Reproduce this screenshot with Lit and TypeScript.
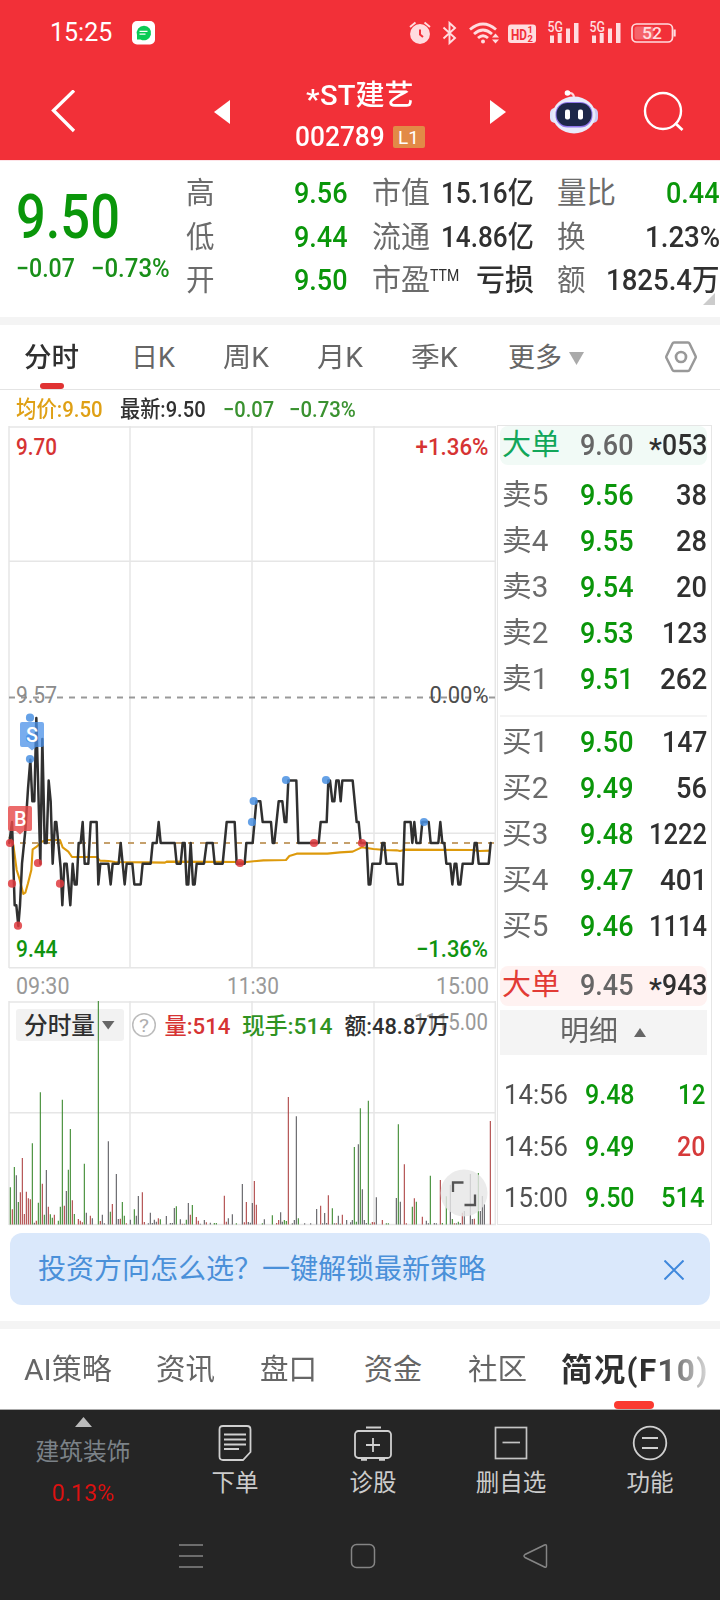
import { LitElement, html, svg, css } from "lit";
import { customElement, property, query } from "lit/decorators.js";

/** A single line of text condensed or widened to a given width. */
@customElement("fit-text")
class FitText extends LitElement {
  @property() text = "";
  @property({ type: Number }) w = 0;
  @query("span") span!: HTMLSpanElement;
  static styles = css`
    :host { display: inline-block; white-space: pre; flex: none; line-height: 1; vertical-align: middle; }
    span { display: block; width: max-content; transform-origin: 0 50%; }
  `;
  render() {
    return html`<span>${this.text}</span>`;
  }
  updated() {
    this.style.width = this.w + "px";
    const natural = this.span.offsetWidth;
    if (natural) this.span.style.transform = `scaleX(${this.w / natural})`;
  }
}

const t = (text: string, w: number, cls = "") =>
  html`<fit-text class=${cls} .text=${text} .w=${w}></fit-text>`;

// Minute prices as [x, cents above 9.00]
const PRICE: number[][] = [
  [28,50],[36,51],[40,49],[44,47],[49,47],[55,46],[60,47],[66,49],[76,50.6],[84,52.6],[91,54],[97,52],[103,52],[109,56],[121,49],[127,55],[134,50],[140,50],[146,53],[152,52],[158,49],[165,51],[169,51],[182,48.8],[187,47],[193,49],[200,49],[211,47],[218,49],[224,48],[230,48],[236,50],[242,50],[248,51],[254,49],[265,49],[272,51],[290,51],[295,48],[301,49],[325,49],[332,48],[338,49],[356,49],[362,50],[374,48],[380,49],[397,49],[403,48],[422,48],[428,49],[452,49],[458,50],[470,50],[476,51],[482,50],[524,50],[530,49],[542,49],[548,50],[554,50],[560,48],[565,48],[572,50],[579,48],[584,48],[590,49],[612,49],[620,50],[638,50],[644,49],[668,49],[680,51],[704,51],[710,49],
  [734,49],[739,50],[758,50],[769,52],[781,52],[788,51],[813,51],[818,50],[823,50],[836,52],[847,52],[854,51],[859,51],[865,53],[889,53],[895,50],[956,50],[962,51],[980,51],[985,53],[990,53],[997,52],[1003,52],[1009,53],[1016,53],[1022,52],[1027,53],[1058,53],[1070,51],[1076,51],[1082,50],[1100,50],[1106,48],[1111,48],[1117,49],[1141,49],[1147,50],[1153,50],[1159,49],[1189,49],[1195,48],[1208,48],[1214,51],[1232,51],[1237,50],[1243,51],[1249,50],[1261,50],[1267,51],[1286,51],[1292,50],[1315,50],[1321,51],[1327,50],[1333,50],[1339,49],[1351,49],[1357,48],[1364,49],[1369,49],[1375,48],[1381,48],[1388,49],[1418,49],[1424,50],[1430,50],[1436,49],[1466,49],[1472,50],
];
const AVG: number[][] = [
  [28,500],[40,525],[50,600],[58,625],[70,672],[76,668],[84,640],[94,600],[98,538],[110,530],[125,515],[140,510],[180,510],[188,532],[205,545],[216,561],[290,561],[300,572],[325,573],[345,576],[440,577],[495,578],[500,575],[740,576],[790,571],[858,570],[868,558],[890,551],[982,551],[1020,547],[1058,545],[1085,532],[1120,537],[1155,540],[1190,541],[1200,543],[1215,539],[1420,540],[1438,543],[1472,542],
];
const DOTS: [string, number, number][] = [
  ["b",90,143],["b",90,205],["b",90,267],["r",30,519],["r",36,641],["r",54,767],["r",114,579],["r",180,641],["r",720,579],
  ["b",756,456],["b",761,393],["b",858,330],["b",978,330],["b",1272,456],["r",942,519],["r",1086,519],
];
const LEFT = `g31,667;r37,733;g43,606;k49,631;g55,711;r61,682;r67,579;r73,747;r79,680;r85,700;r91,703;g97,535;k103,773;r109,767;g115,713;g121,382;r127,656;g133,749;k139,615;r145,725;g151,748;g157,758;r163,749;g175,767;g181,725;g187,404;r193,722;k199,678;g205,614;g211,492;r217,706;g223,747;r235,762;r241,767;r247,772;g253,596;k259,743;r271,752;k277,760;g295,108;r301,768;k307,749;k313,775;k325,529;g331,740;r337,717;k349,627;k355,762;r361,761;g367,711;g373,752;r379,775;k391,764;g403,733;k409,752;k415,693;r427,682;r433,771;k445,775;k451,743;k457,774;k463,764;k469,770;r475,760;g481,763;k499,753;k511,774;k517,774;k523,729;g529,724;k541,763;r547,776;k553,776;g559,764;k565,714;r571,749;g577,720;r589,756;r595,767;k601,776;k613,765;r619,772;k631,773;g643,774;g649,774;r673,692;r679,770;k685,760;k697,748;g709,775;k727,657;r733,772;r739,711`;
const RIGHT = `k10,771;k16,773;k22,714;r28,648;r34,719;g52,775;k58,763;g82,751;r95,774;r101,765;k107,742;k112,770;g118,765;g124,768;r130,396;k142,775;k148,765;k154,454;g160,760;k179,775;k197,775;k215,732;r227,722;k233,775;k239,744;k245,774;r250,691;g262,730;k268,775;r274,775;k280,752;g286,776;r292,749;k305,765;k317,772;k322,765;g328,546;g334,770;k340,538;g346,430;k352,673;k358,765;k364,774;g370,407;g376,776;r382,771;r388,772;k394,697;r412,765;g424,775;g430,775;k454,699;g460,478;k466,710;r478,598;r484,775;g502,725;r508,700;g514,710;r532,755;k544,767;k550,775;g556,632;k568,774;k574,775;r586,645;g592,774;g604,694;k616,659;g622,762;r628,775;k634,775;g640,770;k646,774;r652,743;k658,738;k676,627;k682,762;r688,761;g700,624;k706,738;k712,693;k718,718;r736,468`;
const bars = (src: string, off: number) =>
  src.split(";").map((s) => {
    const [x, y] = s.slice(1).split(",").map(Number);
    return { c: s[0], x: off + x / 3, y: y / 3 };
  });
const VOLUME = [...bars(LEFT, 0), ...bars(RIGHT, 245)];

// Chart-space conversions
const py = (zy: number) => 244 + zy / 3;
const cy = (c: number) => 271.3 + (57 - c) * 20.8;

const label = (cls: string, text: string, x: number, mid: number, w: number, size = 23) =>
  svg`<text class=${cls} x=${x} y=${mid + size * 0.355} font-size=${size} textLength=${w} lengthAdjust="spacingAndGlyphs">${text}</text>`;

@customElement("price-chart")
class PriceChart extends LitElement {
  static styles = css`
    :host { display: block; }
    svg { display: block; overflow: visible; }
    .grid { stroke: #e6e6e6; stroke-width: 1.5; fill: none; }
    .zero { stroke: #999; stroke-width: 1.8; stroke-dasharray: 6 6; }
    .last { stroke: #c5a06c; stroke-width: 1.8; stroke-dasharray: 6 6; }
    .line { stroke: #303030; stroke-width: 2.5; fill: none; stroke-linejoin: round; stroke-linecap: round; }
    .avg { stroke: #dd9a0c; stroke-width: 2.1; fill: none; stroke-linejoin: round; }
    .db { fill: #4a90e2; fill-opacity: .85; }
    .dr { fill: #df3a3e; fill-opacity: .85; }
    .sell { fill: #4a90e8; fill-opacity: .75; }
    .buy { fill: #e84a4a; fill-opacity: .82; }
    text { font-family: Roboto, "Noto Sans CJK SC", sans-serif; font-weight: 500; }
    .red { fill: #d63333; }
    .green { fill: #0f930f; }
    .mute { fill: #8c8c8c; font-weight: 400; }
    .dim { fill: #999; font-weight: 400; }
    .dark { fill: #4d4d4d; font-weight: 400; }
    .mark { fill: #fff; }
  `;
  render() {
    return html`<svg width="496" height="575" viewBox="0 0 496 575">
      <path class="grid" d="M9 1H496M9 135.300H496M9 407.300H496M9 541.700H496M9 0V542M130 0V542M252 0V542M374 0V542M495.3 0V542" />
      <path class="zero" d="M9 271.500H495" />
      <path class="last" d="M20 417H495" />
      <polyline class="avg" points=${AVG.map(([x, y]) => `${x / 3},${py(y)}`).join(" ")} />
      <polyline class="line" points=${PRICE.map(([x, c]) => `${x / 3},${cy(c)}`).join(" ")} />
      ${DOTS.map(([c, x, y]) => svg`<circle class=${"d" + c} cx=${x / 3} cy=${py(y)} r="4.1" />`)}
      <path class="sell" d="M22 296H42Q44 296 44 298V319Q44 321 42 321H36L32 324.500L28 321H22Q20 321 20 319V298Q20 296 22 296Z" />
      <path class="buy" d="M10 380H30Q32 380 32 382V403Q32 405 30 405H24L20 408.500L16 405H10Q8 405 8 403V382Q8 380 10 380Z" />
      ${label("mark", "S", 26, 308.500, 12, 21)} ${label("mark", "B", 14, 392.500, 12.500, 21)}
      ${label("red", "9.70", 16, 21, 41)} ${label("red", "+1.36%", 415.500, 21, 73)}
      ${label("mute", "9.57", 16, 269, 41)} ${label("dark", "0.00%", 429.500, 269, 59)}
      ${label("green", "9.44", 16, 522.500, 41.500)} ${label("green", "−1.36%", 416, 522.500, 72)}
      ${label("dim", "09:30", 16, 559.500, 53.500, 23.500)} ${label("dim", "11:30", 227, 559.500, 52, 23.500)}
      ${label("dim", "15:00", 436, 559.500, 53, 23.500)}
    </svg>`;
  }
}

@customElement("volume-chart")
class VolumeChart extends LitElement {
  static styles = css`
    :host { display: block; }
    svg { display: block; overflow: visible; }
    .grid { stroke: #e6e6e6; stroke-width: 1.5; fill: none; }
    .pill { fill: #f2f2f2; }
    .arrow { fill: #666; }
    .help { fill: none; stroke: #bcbcbc; stroke-width: 1.5; }
    .bg { stroke: #3d8a30; } .br { stroke: #ae4545; } .bk { stroke: #5e5e62; }
    .bar { stroke-width: 1.1; }
    .disc { fill: #e6e6e6; fill-opacity: .82; }
    .corner { fill: none; stroke: #555; stroke-width: 2.3; }
    text { font-family: Roboto, "Noto Sans CJK SC", sans-serif; font-weight: 500; }
    .ink { fill: #303030; }
    .red { fill: #d63333; }
    .green { fill: #2f931f; }
    .dim { fill: #999; font-weight: 400; }
    .q { fill: #b0b0b0; font-weight: 400; }
  `;
  render() {
    return html`<svg width="496" height="224" viewBox="0 0 496 224">
      <path class="grid" d="M9 1H496M9 111.700H496M9 223.500H496M9 0V224M130 0V224M252 0V224M374 0V224M495.300 0V224" />
      <rect class="pill" x="16" y="8" width="108" height="32" rx="3" />
      ${VOLUME.map((b) => svg`<path class=${"bar b" + b.c} d=${`M${b.x} 223.500V${b.y - 36}`} />`)}
      ${label("ink", "分时量", 24, 25, 71, 23.500)}
      <path class="arrow" d="M102 20H114.500L108.200 28.500Z" />
      <circle class="help" cx="144" cy="24" r="11.300" />
      ${label("q", "?", 139, 24.500, 10, 18)}
      ${label("dim", "1115.00", 414, 21, 74)}
      ${label("red", "量:514", 164.500, 25, 66, 22.800)}
      ${label("green", "现手:514", 242, 25, 90.500, 22.800)}
      ${label("ink", "额:48.87万", 344.500, 25, 105, 22.800)}
      <circle class="disc" cx="464" cy="192" r="23.500" />
      <path class="corner" d="M453 191V181.500H463.500M464.500 204H475V193.500" />
    </svg>`;
  }
}

const QUOTE = [
  ["高", "9.56", "市值", "15.16亿", 93, "量比", "0.44", 54, "up"],
  ["低", "9.44", "流通", "14.86亿", 93, "换", "1.23%", 75, ""],
  ["开", "9.50", "市盈", "亏损", 58, "额", "1825.4万", 114, ""],
] as const;
const SELL = [["卖5","9.56","38",31],["卖4","9.55","28",31],["卖3","9.54","20",31],["卖2","9.53","123",45],["卖1","9.51","262",47]] as const;
const BUY = [["买1","9.50","147",45],["买2","9.49","56",31],["买3","9.48","1222",58],["买4","9.47","401",47],["买5","9.46","1114",58]] as const;
const TRADES = [["14:56","9.48","12",27,"up"],["14:56","9.49","20",28,"down"],["15:00","9.50","514",44,"up"]] as const;

@customElement("app-root")
class AppRoot extends LitElement {
  static styles = css`
    :host { display: block; width: 720px; height: 1600px; overflow: hidden; background: #fff; color: #303030;
      font-family: Roboto, "Noto Sans CJK SC", sans-serif; }
    svg { display: block; flex: none; }
    .row { display: flex; align-items: center; }
    .top { background: #f23038; color: #fff; height: 160px; border-bottom: 1px solid #fde4e8; }
    .status { height: 64px; padding: 1px 0 0 50px; box-sizing: border-box; font-size: 25px; }
    .status .app { margin-left: 20px; }
    .status .tray { margin-left: 253px; }
    .head { height: 96px; }
    .back { margin-left: 50px; }
    .prev { margin-left: 137px; }
    .title { width: 260px; height: 96px; display: flex; flex-direction: column; align-items: center; }
    .name { font-size: 28.500px; font-weight: 500; height: 36px; margin-top: 14px; }
    .star { margin-top: 8px; }
    .code { font-size: 27.500px; font-weight: 500; height: 45px; gap: 8px; padding-right: 1px; }
    .level { width: 32px; height: 22px; line-height: 23px; background: #e28a47; border-radius: 2px; font-size: 19px; font-weight: 400; text-align: center; }
    .robot { margin-left: 44px; }
    .find { margin-left: 45px; }
    .quote { height: 156px; display: grid; grid-template-columns: 187px 533px; position: relative; }
    .now { padding: 22px 0 0 16px; color: #0a960a; }
    .big { font-size: 61.500px; font-weight: 500; height: 68px; line-height: 68px; display: block; }
    .chg { font-size: 25.500px; font-weight: 500; margin-top: 1px; gap: 16px; height: 34px; color: #198f19; }
    .facts { display: grid; grid-template-rows: repeat(3, 43.700px); padding-top: 11px; font-size: 29.500px; }
    .fact { display: grid; grid-template-columns: 28px 133px 186px 187px; align-items: center; }
    .lab { color: #6b6b6b; font-weight: 400; }
    .facts .lab { margin-left: -1px; }
    .val { font-weight: 500; }
    .end { display: flex; justify-content: flex-end; align-items: center; }
    .pair { display: flex; justify-content: space-between; align-items: center; }
    .mid { padding: 0 0 0 25px; }
    .last { padding: 0 1px 0 24px; }
    .tag { display: flex; align-items: flex-start; }
    .ttm { font-size: 16px; display: flex; margin-top: 2px; }
    .up { color: #0a960a; }
    .down { color: #d63a3a; }
    .fold { position: absolute; right: 5px; bottom: 12px; }
    .band { height: 8px; background: #f4f4f4; }
    .tabs { height: 65px; border-bottom: 1px solid #e4e4e4; font-size: 27px; color: #666; box-sizing: border-box; padding: 3px 0 0 24px; position: relative; }
    .tabs .on { color: #303030; font-weight: 500; }
    .tabs .bar { position: absolute; left: 40px; bottom: 0; width: 24px; height: 6px; border-radius: 3px; background: #e03232; }
    .g1 { margin-left: 52px; } .g2 { margin-left: 48px; } .g4 { margin-left: 50px; } .g5 { margin-left: 7px; } .g6 { margin-left: 81px; margin-top: -4px; }
    .info { height: 36px; padding: 3px 0 0 16px; box-sizing: border-box; font-size: 22.500px; font-weight: 500; color: #3a9230; }
    .avg { color: #dfa015; }
    .ink { color: #303030; margin: 0 17px 0 17px; }
    .pct { margin-left: 15px; }
    .market { display: grid; grid-template-columns: 497px 215px; height: 800px; }
    .book { border: 1px solid #e6e6e6; box-sizing: border-box; width: 214.500px; padding: 0 3.500px 0 2px; margin-top: -1px; height: 800px; font-size: 29px; }
    .line { display: grid; grid-template-columns: 78px 54px 73px; height: 46px; align-items: center; padding-left: 2px; }
    .line .val { font-size: 29px; }
    .block { height: 38.500px; border-radius: 8px; }
    .ask { background: #f1faf6; } .ask .lab { color: #12a65a; }
    .bid { background: #fff2f1; height: 40px; margin-top: 16px; } .bid .lab { color: #e23b35; }
    .gray { color: #666; }
    .asks { padding-top: 8px; }
    .bids { border-top: 2px solid #f4f4f4; margin-top: 12px; padding-top: 3px; }
    .detail { height: 45px; background: #f4f4f4; margin-top: 4px; padding-left: 60px; gap: 16px; color: #666; font-size: 28.500px; }
    .trades { padding-top: 15px; font-size: 28.500px; }
    .trade { display: grid; grid-template-columns: 81px 50px 70px; height: 51.700px; align-items: center; padding-left: 4px; }
    .trade .tm { color: #505050; }
    .banner { margin: 7px 10px 16px; height: 72px; border-radius: 12px; background: #dae8fb; color: #4a90d9; font-size: 28px; padding: 2px 26px 0 28px; box-sizing: border-box; justify-content: space-between; }
    .pages { box-sizing: border-box; padding: 3px 0 0 24px; font-size: 29px; color: #666; position: relative; border-bottom: 1px solid #aaa; height: 81px; }
    .pages .sel { margin-left: 34px; line-height: 40px; font-size: 31.500px; letter-spacing: 1.300px; font-weight: 700; background: linear-gradient(90deg, #303030 62%, #dcdcdc 100%); -webkit-background-clip: text; background-clip: text; color: transparent; }
    .pages .bar { position: absolute; left: 614px; bottom: 0; width: 40px; height: 8px; border-radius: 4px; background: #fb3a30; }
    .p1 { margin-left: 44px; } .p2 { margin-left: 45px; } .p3 { margin-left: 47px; } .p4 { margin-left: 46px; }
    .tools { background: #252525; height: 102px; display: grid; grid-template-columns: 166px 138px 138px 138px 140px; color: #ccc; font-size: 23.500px; }
    .tool { display: flex; flex-direction: column; align-items: center; }
    .tool svg { margin-top: 13px; height: 38px; }
    .tool span { line-height: 34px; margin-top: 5px; }
    .tool .sector { color: #7b8288; font-size: 23.700px; margin-top: 8px; }
    .tool .rise { color: #dd1212; font-size: 24.500px; margin-top: 7px; height: 34px; display: flex; align-items: center; }
    .tool .caret { height: 10px; margin-top: 7px; }
    .nav { background: #252525; height: 88px; padding-left: 178px; box-sizing: border-box; }
    .n2 { margin-left: 146px; } .n3 { margin-left: 146px; }
  `;

  private bookRow(r: readonly (string | number)[], cls = "", price = "up") {
    const qty = r[2] as string;
    const w = r[3] as number;
    return html`<div class="line ${cls}">
      ${t(r[0] as string, cls ? 58 : 46, "lab")} ${t(r[1] as string, 54, price + " val")}
      <span class="end">${qty[0] === "*" ? html`${t("*", 13, "val star")}${t(qty.slice(1), w - 13, "val")}` : t(qty, w, "val")}</span>
    </div>`;
  }

  private tray() {
    const c = "#ffdcdf";
    return html`<svg class="tray" width="270" height="30" viewBox="408 17 270 30">
      <g fill="none" stroke=${c} stroke-width="1.900">
        <circle cx="420" cy="33" r="9" fill=${c} />
        <path d="M410 26L415.500 21.500M430 26L424.500 21.500" />
        <path d="M420 28.500V33.500L423 36" stroke="#f23038" stroke-width="2" />
        <path d="M443.500 26.500L455 37L449.500 42V22L455 27L443.500 37.500" />
        <path d="M470 28.500Q483 17.500 496 28.500M474 33Q483 25 492 33M478 37Q483 32.500 488 37" stroke-width="2.800" />
      </g>
      <g fill=${c}>
        <circle cx="483" cy="40.500" r="2" />
        <path d="M492 36.500H499L495.500 32.500ZM492 38.500H499L495.500 42.500Z" />
        <rect x="508" y="23.500" width="28" height="18.500" rx="3" />
        <path d="M550 34.500h4v7.500h-4zM557.700 32h4v10h-4zM566 27.500h4v14.500h-4zM574 22h4.500v20H574zM592 34.500h4v7.500h-4zM599.700 32h4v10h-4zM608 27.500h4v14.500h-4zM616 22h4.500v20H616zM673.500 28.500h2.200v7h-2.200z" />
      </g>
      <g font-family="Roboto, sans-serif" font-weight="700">
        <text x="511" y="38.500" font-size="15.500" fill="#f23038" textLength="16" lengthAdjust="spacingAndGlyphs">HD</text>
        <text x="527.500" y="32" font-size="9.500" fill="#f23038">1</text>
        <text x="527.500" y="41" font-size="9.500" fill="#f23038">2</text>
        <text x="547.500" y="31" font-size="14.500" font-weight="500" fill=${c} textLength="15.500" lengthAdjust="spacingAndGlyphs">5G</text>
        <text x="589.500" y="31" font-size="14.500" font-weight="500" fill=${c} textLength="15.500" lengthAdjust="spacingAndGlyphs">5G</text>
      </g>
      <rect x="632" y="23" width="40.500" height="18" rx="4.500" fill="none" stroke=${c} stroke-width="1.700" />
      <rect x="634.500" y="25.500" width="19" height="13" rx="2.500" fill="#f5636a" />
      <text x="642" y="38" font-family="Roboto, sans-serif" font-size="16.500" font-weight="500" fill=${c} textLength="20" lengthAdjust="spacingAndGlyphs">52</text>
    </svg>`;
  }

  render() {
    return html`
      <div class="top">
        <div class="row status">
          ${t("15:25", 62)}
          <svg class="app" width="23" height="24" viewBox="0 0 23 24">
            <rect width="23" height="23.500" rx="5" fill="#fff" />
            <path d="M12 4.700a7.300 7.300 0 1 1-3.500 13.800H5L5 14A7.300 7.300 0 0 1 12 4.700Z" fill="#0bcb55" />
            <path d="M7.500 10.300h8M7.500 13.200h6" stroke="#fff" stroke-width="1.200" />
          </svg>
          ${this.tray()}
        </div>
        <div class="row head">
          <svg class="back" width="27" height="44" viewBox="0 0 27 44"><path d="M24 .5L3.500 20.500L24 41" fill="none" stroke="#fff" stroke-width="3.300" /></svg>
          <svg class="prev" width="16" height="24" viewBox="0 0 16 24"><path d="M0 12L16 0V24Z" fill="#fff" /></svg>
          <div class="title">
            <div class="row name">${t("*", 14, "star")}${t("ST建艺", 94)}</div>
            <div class="row code">${t("002789", 90)}<span class="level">L1</span></div>
          </div>
          <svg width="16" height="24" viewBox="0 0 16 24"><path d="M16 12L0 0V24Z" fill="#fff" /></svg>
          <svg class="robot" width="48" height="46" viewBox="0 0 48 46">
            <path d="M18 4.500Q24 3 24 9" fill="none" stroke="#ffd5dc" stroke-width="2.200" />
            <circle cx="17.500" cy="4" r="2.800" fill="#fff" />
            <rect x="0" y="19" width="10" height="15" rx="5" fill="#dfe3fb" /><rect x="38" y="19" width="10" height="15" rx="5" fill="#c9cbf5" />
            <ellipse cx="24" cy="26" rx="21.500" ry="18.500" fill="#e9ebfb" />
            <rect x="5.500" y="13" width="37" height="25.500" rx="12" fill="#9178ec" />
            <rect x="6.500" y="14" width="35" height="23" rx="11" fill="#1d2749" />
            <rect x="15" y="20.500" width="5" height="10" rx="2" fill="#fff" /><rect x="28" y="20.500" width="5" height="10" rx="2" fill="#fff" />
          </svg>
          <svg class="find" width="44" height="44" viewBox="0 0 44 44"><circle cx="20" cy="21" r="18" fill="none" stroke="#fff" stroke-width="2.400" /><path d="M32 33L39.500 40" stroke="#fff" stroke-width="2.800" /></svg>
        </div>
      </div>

      <div class="quote">
        <div class="now">
          ${t("9.50", 104, "big")}
          <div class="row chg">${t("−0.07", 59)}${t("−0.73%", 79)}</div>
        </div>
        <div class="facts">
          ${QUOTE.map((q, i) => html`<div class="fact">
            ${t(q[0], 29, "lab")}
            <span class="end">${t(q[1], 54, "val up")}</span>
            <span class="pair mid"><span class="tag">${t(q[2], 58, "lab")}${i === 2 ? html`<span class="ttm">${t("TTM", 29)}</span>` : ""}</span>${t(q[3], q[4], "val")}</span>
            <span class="pair last">${t(q[5], q[5].length > 1 ? 59 : 29, "lab")}${t(q[6], q[7], "val " + q[8])}</span>
          </div>`)}
        </div>
        <svg class="fold" width="12" height="12" viewBox="0 0 12 12"><path d="M12 0V12H0Z" fill="#ccc" /></svg>
      </div>
      <div class="band"></div>

      <div class="row tabs">
        ${t("分时", 55, "on")}${t("日K", 44, "g1")}${t("周K", 46, "g2")}${t("月K", 46, "g2")}${t("季K", 47, "g2")}${t("更多", 54, "g4")}
        <svg class="g5" width="15" height="13" viewBox="0 0 15 13"><path d="M0 0H15L7.500 13Z" fill="#aaa" /></svg>
        <svg class="g6" width="32" height="32" viewBox="0 0 32 32"><path d="M9 1.500H23Q24 1.500 24.500 2.500L30.500 15Q31 16 30.500 17L24.500 29Q24 30 23 30H9Q8 30 7.500 29L1.500 17Q1 16 1.500 15L7.500 2.500Q8 1.500 9 1.500Z" fill="none" stroke="#999" stroke-width="2.500" /><circle cx="16" cy="16" r="5" fill="none" stroke="#999" stroke-width="2.700" /></svg>
        <span class="bar"></span>
      </div>
      <div class="row info">
        ${t("均价:9.50", 87, "avg")}${t("最新:9.50", 86, "ink")}${t("−0.07", 51)}${t("−0.73%", 67, "pct")}
      </div>

      <div class="market">
        <div><price-chart></price-chart><volume-chart></volume-chart></div>
        <div class="book">
          ${this.bookRow(["大单", "9.60", "*053", 58], "block ask", "gray")}
          <div class="asks">${SELL.map((r) => this.bookRow(r))}</div>
          <div class="bids">${BUY.map((r) => this.bookRow(r))}</div>
          ${this.bookRow(["大单", "9.45", "*943", 58], "block bid", "gray")}
          <div class="row detail">${t("明细", 58)}<svg width="12" height="9" viewBox="0 0 12 9"><path d="M6 0L12 9H0Z" fill="#666" /></svg></div>
          <div class="trades">
            ${TRADES.map((r) => html`<div class="trade">${t(r[0], 64, "tm")}${t(r[1], 50, "val up")}<span class="end">${t(r[2], r[3], "val " + r[4])}</span></div>`)}
          </div>
        </div>
      </div>

      <div class="row banner">
        ${t("投资方向怎么选？一键解锁最新策略", 448)}
        <svg width="20" height="20" viewBox="0 0 20 20"><path d="M.5 .5L19.500 19.500M19.500 .5L.5 19.500" stroke="#3f88dc" stroke-width="2" /></svg>
      </div>
      <div class="band"></div>
      <div class="row pages">
        ${t("AI策略", 88)}${t("资讯", 59, "p1")}${t("盘口", 57, "p2")}${t("资金", 58, "p3")}${t("社区", 59, "p4")}
        <span class="sel">简况(F10)</span>
        <span class="bar"></span>
      </div>

      <div class="tools">
        <div class="tool">
          <svg class="caret" width="17" height="10" viewBox="0 0 17 10"><path d="M8.500 0L17 10H0Z" fill="#bbb" /></svg>
          <span class="sector">建筑装饰</span><span class="rise">${t("0.13%", 63)}</span>
        </div>
        <div class="tool">
          <svg width="34" height="38" viewBox="0 0 34 38" fill="none" stroke="#d0d0d0" stroke-width="1.800"><path d="M5 3H29Q32.500 3 32.500 6.500V29L25 37H5Q1.500 37 1.500 33.500V6.500Q1.500 3 5 3ZM6 11.500H28M6 16.500H28M6 21.500H28M6 26H21" /></svg>
          <span>下单</span>
        </div>
        <div class="tool">
          <svg width="40" height="38" viewBox="0 0 40 38" fill="none" stroke="#d0d0d0" stroke-width="1.800"><rect x="2" y="8" width="36" height="27" rx="3.500" /><path d="M13 4.500H28M20 15V29M13 22H27" /><path d="M8 36.500H14M26 36.500H32" stroke-width="2.500" /></svg>
          <span>诊股</span>
        </div>
        <div class="tool">
          <svg width="34" height="38" viewBox="0 0 34 38" fill="none" stroke="#c4c4c4" stroke-width="1.700"><rect x="1.500" y="4.500" width="31" height="31" /><path d="M8.500 19.500H26" /></svg>
          <span>删自选</span>
        </div>
        <div class="tool">
          <svg width="36" height="38" viewBox="0 0 36 38" fill="none" stroke="#d0d0d0" stroke-width="1.800"><circle cx="18" cy="20" r="16.300" /><path d="M10 15H26M10 25H26" /></svg>
          <span>功能</span>
        </div>
      </div>
      <div class="row nav">
        <svg width="26" height="26" viewBox="0 0 26 26"><path d="M1 2H25M1 13H25M1 24H25" stroke="#858585" stroke-width="1.600" /></svg>
        <svg class="n2" width="26" height="26" viewBox="0 0 26 26"><rect x="1.500" y="1.500" width="23" height="23" rx="5" fill="none" stroke="#858585" stroke-width="1.500" /></svg>
        <svg class="n3" width="26" height="26" viewBox="0 0 26 26"><path d="M22.500 2Q24.500 1 24.500 3.500V22.500Q24.500 25 22.500 24L3 14.500Q1 13 3 11.500Z" fill="none" stroke="#858585" stroke-width="1.500" /></svg>
      </div>
    `;
  }
}
